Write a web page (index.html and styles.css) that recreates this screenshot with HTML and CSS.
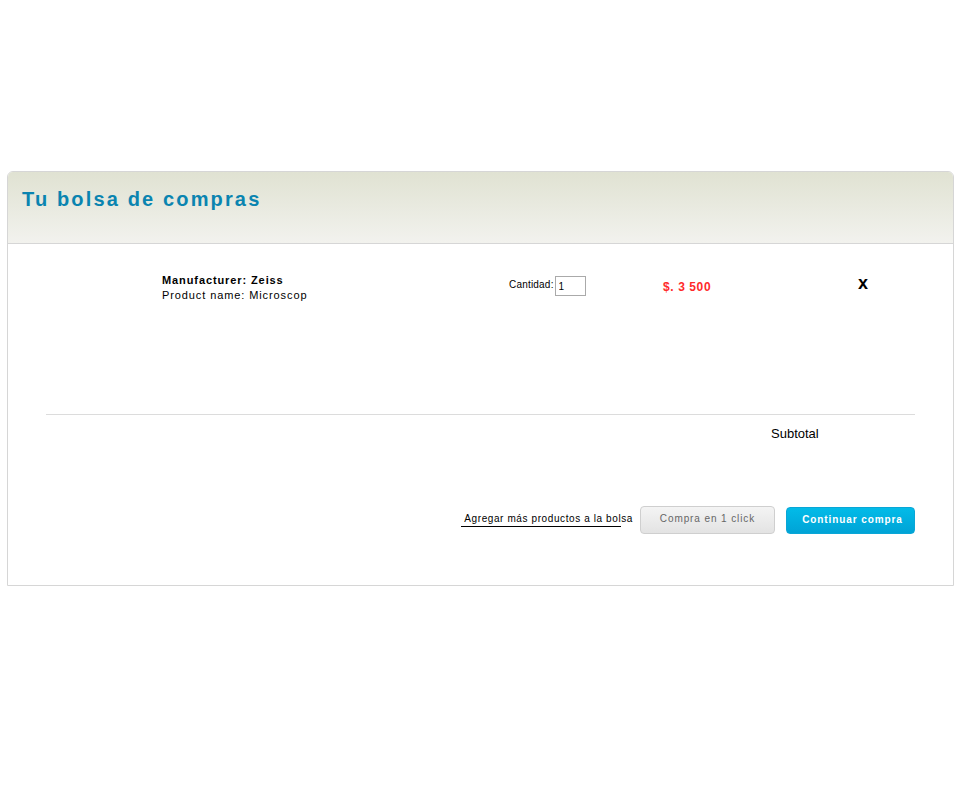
FILE: index.html
```html
<!DOCTYPE html>
<html lang="es">
<head>
<meta charset="utf-8">
<title>Tu bolsa de compras</title>
<link rel="stylesheet" href="styles.css">
</head>
<body>
<div class="cart">
  <div class="cart-head">
    <h1 class="cart-title">Tu bolsa de compras</h1>
  </div>
  <div class="cart-body">
    <div class="item">
      <div class="item-info">
        <div class="item-maker">Manufacturer: Zeiss</div>
        <div class="item-name">Product name: Microscop</div>
      </div>
      <div class="item-qty">
        <span class="qty-label">Cantidad:</span><input class="qty-input" type="text" value="1">
      </div>
      <div class="item-price">$. 3 500</div>
      <div class="item-remove">x</div>
    </div>
    <div class="divider"></div>
    <div class="subtotal">Subtotal</div>
    <div class="actions">
      <a class="more-link" href="#">Agregar más productos a la bolsa</a>
      <button class="btn btn-gray" type="button">Compra en 1 click</button>
      <button class="btn btn-blue" type="button">Continuar compra</button>
    </div>
  </div>
</div>
</body>
</html>
```
FILE: styles.css
```css
html, body {
  margin: 0;
  padding: 0;
  background: #fff;
  font-family: "Liberation Sans", Arial, sans-serif;
}

.cart {
  margin: 171px 0 0 7px;
  width: 947px;
  box-sizing: border-box;
  border: 1px solid #d6d6d6;
  border-radius: 6px 6px 0 0;
}

.cart-head {
  height: 72px;
  box-sizing: border-box;
  border-bottom: 1px solid #d6d6d6;
  border-radius: 5px 5px 0 0;
  background: linear-gradient(to bottom, #e0e2d2 0%, #f2f2ee 100%);
  padding: 15px 0 0 14px;
}

.cart-title {
  margin: 0;
  font-size: 20px;
  line-height: 24px;
  font-weight: bold;
  letter-spacing: 2.15px;
  color: #0a84b0;
}

.cart-body {
  padding: 30px 38px 51px 38px;
}

.item {
  display: flex;
  align-items: flex-start;
  height: 140px;
}

.item-info {
  margin: -1px 0 0 116px;
  width: 347px;
  font-size: 11px;
  line-height: 15px;
  letter-spacing: 0.9px;
  color: #000;
}

.item-maker {
  font-weight: bold;
}

.item-qty {
  display: flex;
  align-items: flex-start;
  width: 154px;
  font-size: 10px;
  padding-top: 4px;
}

.qty-label {
  line-height: 13px;
  letter-spacing: 0.2px;
  margin-right: 1px;
}

.qty-input {
  width: 31px;
  height: 20px;
  box-sizing: border-box;
  border: 1px solid #aaa;
  margin: -2px 0 0 0;
  padding: 1px 3px;
  font-family: "Liberation Sans", Arial, sans-serif;
  font-size: 10px;
  color: #000;
}

.item-price {
  width: 195px;
  padding-top: 6px;
  font-size: 12px;
  line-height: 15px;
  font-weight: bold;
  color: #ff2a2a;
  letter-spacing: 0.6px;
}

.item-remove {
  font-size: 18px;
  line-height: 14px;
  font-weight: bold;
  color: #000;
  padding-top: 2px;
}

.divider {
  height: 1px;
  background: #dcdcdc;
}

.subtotal {
  margin: 12px 0 0 725px;
  font-size: 13px;
  line-height: 14px;
  color: #000;
}

.actions {
  display: flex;
  justify-content: flex-end;
  align-items: center;
  margin-top: 65px;
  gap: 11px;
}

.more-link {
  font-size: 10px;
  line-height: 14px;
  letter-spacing: 0.6px;
  color: #000;
  text-decoration: none;
  padding: 0 0 1px 3px;
  margin-right: -4px;
  margin-top: -2px;
  background: linear-gradient(#000, #000) no-repeat 0 100% / 160px 1px;
}

.btn {
  height: 28px;
  box-sizing: border-box;
  border-radius: 4px;
  font-family: "Liberation Sans", Arial, sans-serif;
  font-size: 10px;
  letter-spacing: 1.2px;
  padding: 0;
  cursor: pointer;
}

.btn-gray {
  width: 135px;
  border: 1px solid #cfcfcf;
  background: linear-gradient(to bottom, #f4f4f4, #e3e3e3);
  color: #666;
  letter-spacing: 0.9px;
  padding-bottom: 4px;
}

.btn-blue {
  width: 129px;
  height: 27px;
  border: 1px solid #0aa6d6;
  background: linear-gradient(to bottom, #02bbe8, #00a3d6);
  color: #fff;
  font-weight: bold;
  letter-spacing: 0.9px;
  padding: 0 0 2px 4px;
}
```
